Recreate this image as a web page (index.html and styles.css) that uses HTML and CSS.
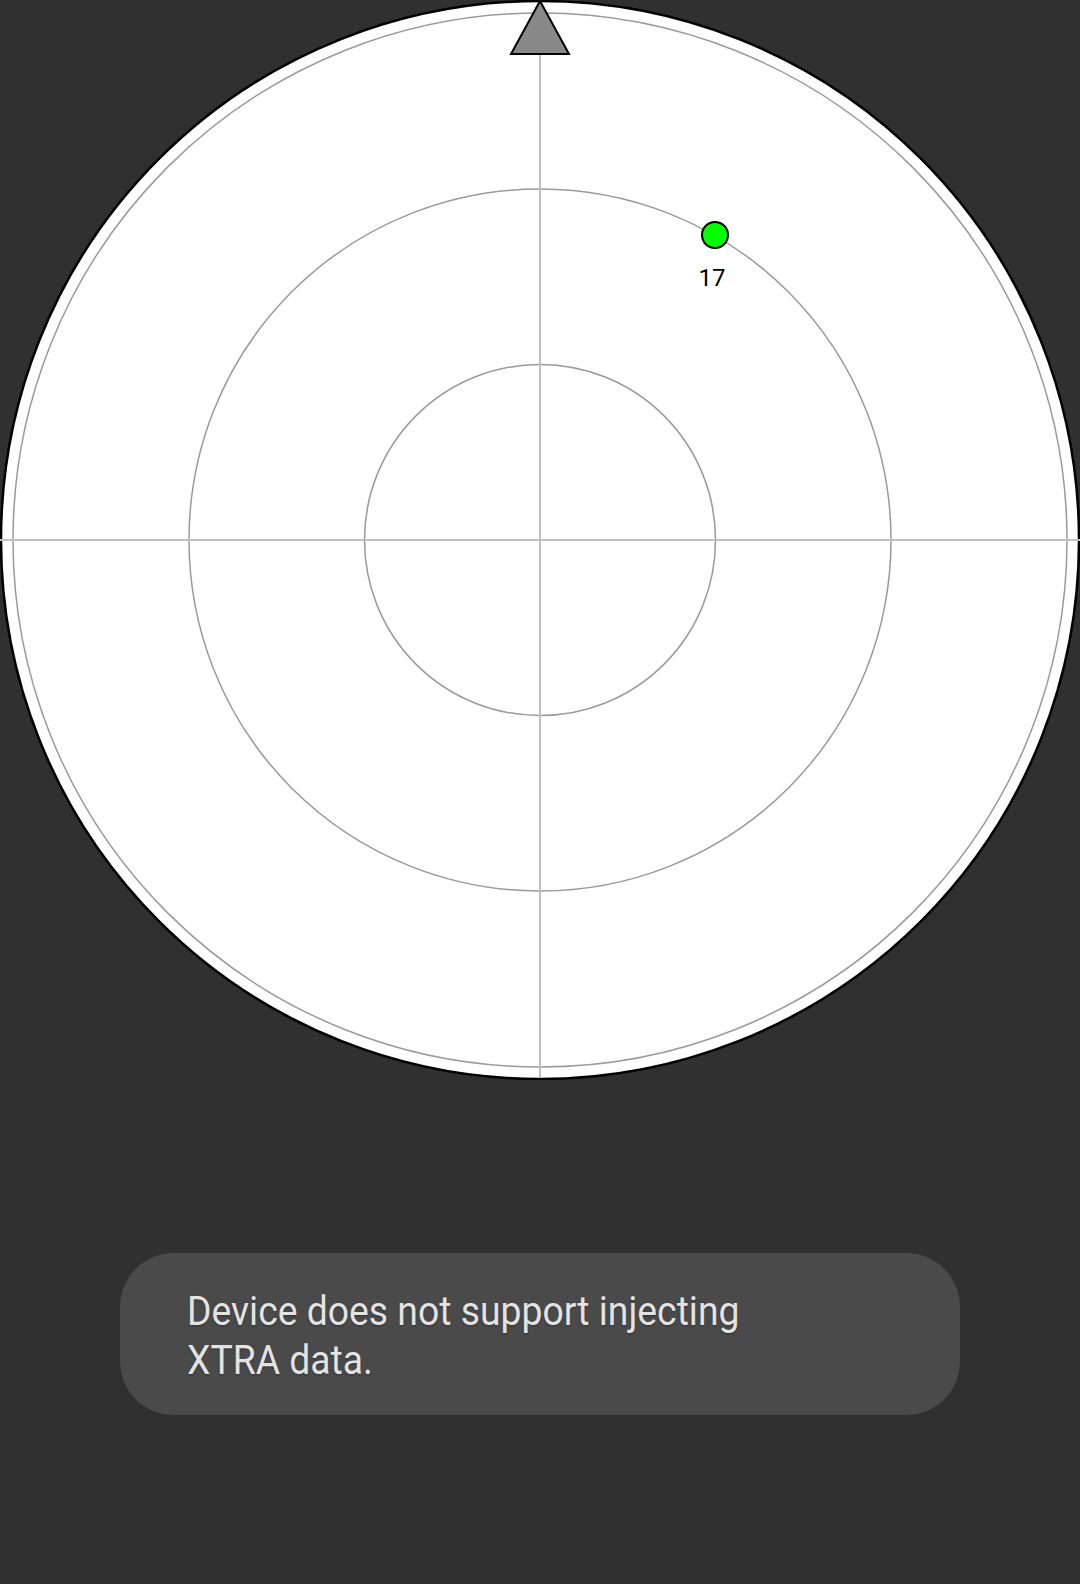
FILE: index.html
```html
<!DOCTYPE html>
<html>
<head>
<meta charset="utf-8">
<link rel="stylesheet" href="styles.css">
</head>
<body>
<main class="screen">
  <svg class="radar" width="1080" height="1080" viewBox="0 0 1080 1080">
    <circle cx="540" cy="540" r="539" fill="#ffffff" stroke="#000000" stroke-width="2.5"/>
    <circle cx="540" cy="540" r="527" fill="none" stroke="#9a9a9a" stroke-width="1.5"/>
    <circle cx="540" cy="540" r="351" fill="none" stroke="#9a9a9a" stroke-width="1.5"/>
    <circle cx="540" cy="540" r="175.5" fill="none" stroke="#9a9a9a" stroke-width="1.5"/>
    <line x1="0" y1="540" x2="1080" y2="540" stroke="#c0c0c0" stroke-width="2"/>
    <line x1="540" y1="0" x2="540" y2="1078" stroke="#c0c0c0" stroke-width="2"/>
    <polygon points="540,1 569,54 511,54" fill="#888888" stroke="#000000" stroke-width="2" stroke-linejoin="miter"/>
    <circle cx="715" cy="235" r="13" fill="#00ff00" stroke="#000000" stroke-width="2"/>
    <text x="712" y="286" class="sat-label" text-anchor="middle">17</text>
  </svg>
  <div class="toast">
    <p class="toast-text">Device does not support injecting<br>XTRA data.</p>
  </div>
</main>
</body>
</html>
```
FILE: styles.css
```css
html, body {
  margin: 0;
  padding: 0;
  background: #303030;
}
.screen {
  width: 1080px;
  height: 1584px;
  display: flex;
  flex-direction: column;
  align-items: center;
  overflow: hidden;
}
.radar {
  display: block;
  flex: none;
}
.sat-label {
  font-family: Roboto, "Liberation Sans", sans-serif;
  font-size: 24px;
  fill: #000000;
}
.toast {
  margin-top: 173px;
  width: 840px;
  height: 162px;
  box-sizing: border-box;
  background: #4a4a4a;
  border-radius: 54px;
  padding: 34px 40px 0 67px;
}
.toast-text {
  margin: 0;
  white-space: nowrap;
  font-family: Roboto, "Liberation Sans", sans-serif;
  font-size: 41px;
  line-height: 49px;
  color: #e3e3e3;
  transform: scaleX(0.91);
  transform-origin: left top;
  text-shadow: 0 1px 2px rgba(0,0,0,0.35);
}
```
